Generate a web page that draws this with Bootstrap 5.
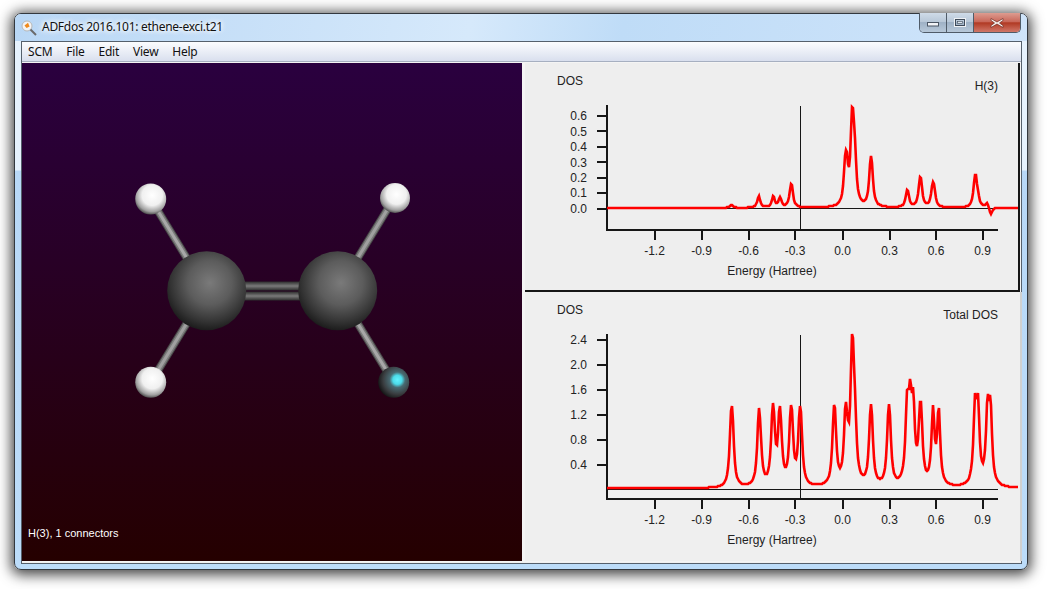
<!DOCTYPE html>
<html lang="en">
<head>
<meta charset="utf-8">
<title>ADFdos 2016.101: ethene-exci.t21</title>
<link href="https://cdn.jsdelivr.net/npm/bootstrap@5.3.0/dist/css/bootstrap.min.css" rel="stylesheet">
<style>
html,body{height:100%;overflow:hidden;background:#fff}
.app-win{width:1014px;height:557px;margin:13px 0 0 14px;border:1px solid #33383e;border-radius:7px;position:relative;
  background:linear-gradient(to bottom,#e6f2fd 0,#e6f2fd 156px,#b8d8f7 157px,#bcdcf9 100%);
  box-shadow:0 2px 13px 3px rgba(0,0,0,.72)}
.title-strip{height:27px;padding-left:6px;gap:5px;background:linear-gradient(100deg,#b9d7f5 0,#d6e9fb 45%,#bfdcf7 60%,#cfe4fa 100%);border-radius:6px 6px 0 0}
.title-text{font:12px/1 "Noto Sans","Open Sans",sans-serif;letter-spacing:-.28px;color:#111;text-shadow:0 0 6px #fff,0 0 6px #fff,0 0 4px #fff;margin-top:-1px}
.win-ctl{position:absolute;top:-1px;right:6px;height:20px;width:102px;border:1px solid #4f5b68;border-top:0;border-radius:0 0 5px 5px;overflow:hidden}
.win-btn{height:100%;border-right:1px solid #4f5b68;background:linear-gradient(to bottom,#cfdbe8 0,#b9c8d8 45%,#9fb2c6 50%,#b7c8d9 100%)}
.wb-n{width:28px}.wb-c{width:47px;border-right:0;background:linear-gradient(to bottom,#dd9c90 0,#c9685a 45%,#b13a24 52%,#d0786a 100%)}
.client-box{margin:0 5px 0 6px;height:523px;border:1px solid #55606c;background:#f0f0f0}
.menu-strip{height:20px;padding-left:6px;gap:13.8px;background:linear-gradient(to bottom,#fbfcfe 0,#eef1f8 40%,#d9dfee 100%);border-bottom:1px solid #a6afc0;font:12px/19px "Noto Sans","Open Sans",sans-serif;letter-spacing:-.2px;color:#111}
.work-area{height:500px;padding-top:1px;background:#f4f4f4}
.mol-pane{width:500px;height:498px;background:linear-gradient(to bottom,#2a003f 0,#250000 100%)}
.mol-pane svg{display:block}
.mol-caption{font:11px/1 "Liberation Sans",Arial,sans-serif;color:#fff;padding:0 0 22px 6px}
.plots-col{width:498px;margin-left:3px}
.plot-a{height:229px;width:495px;background:#eeeeee;border-right:2px solid #161616;border-bottom:2px solid #161616}
.plot-b{height:269px;width:497px;background:#efefef;border-right:2px solid #d0d0d0}
.plot-a svg,.plot-b svg{display:block}
.plot-svg text{font:12px "Liberation Sans",Arial,sans-serif;fill:#222}
.ax{stroke:#161616;stroke-width:2;fill:none;shape-rendering:crispEdges}
.thin{stroke:#161616;stroke-width:1;fill:none;shape-rendering:crispEdges}
.spec{stroke:#ff0000;stroke-width:2.6;fill:none;stroke-linejoin:miter}
</style>
</head>
<body class="m-0">
<div class="app-win">
  <div class="title-strip d-flex align-items-center">
    <svg width="16" height="16" viewBox="0 0 16 16"><circle cx="6" cy="6" r="5" fill="#f4f4f4" stroke="#b8b8b8"/><path d="M3.5 5.5 7 2.8 8.6 6.5 5.6 8z" fill="#f08a1c"/><path d="M9.5 9.5 15 15" stroke="#6a6a6a" stroke-width="2"/></svg>
    <span class="title-text">ADFdos 2016.101: ethene-exci.t21</span>
  </div>
  <div class="win-ctl d-flex">
    <div class="win-btn wb-n d-flex align-items-center justify-content-center"><svg width="14" height="8" viewBox="0 0 14 8"><rect x="1.5" y="3.5" width="11" height="3.5" fill="#f2f4f7" stroke="#4a5563"/></svg></div>
    <div class="win-btn wb-n d-flex align-items-center justify-content-center"><svg width="14" height="12" viewBox="0 0 14 12"><rect x="1.5" y="1.5" width="11" height="8" fill="none" stroke="#eef1f5" stroke-width="1"/><rect x="2.5" y="2.5" width="9" height="6" fill="none" stroke="#3f4a58"/><rect x="4.5" y="4.5" width="5" height="2" fill="#dfe6ee" stroke="#3f4a58" stroke-width=".6"/></svg></div>
    <div class="win-btn wb-c d-flex align-items-center justify-content-center"><svg width="16" height="12" viewBox="0 0 16 12"><path d="M2 1.5 8 5l6-3.500v2L10.500 6 14 8.500v2L8 7l-6 3.500v-2L5.500 6 2 3.500z" fill="#f6f1ef" stroke="#6d2a1f" stroke-width=".7"/></svg></div>
  </div>
  <div class="client-box">
    <nav class="menu-strip d-flex"><span>SCM</span><span>File</span><span>Edit</span><span>View</span><span>Help</span></nav>
    <div class="work-area d-flex">
      <div class="mol-pane d-flex flex-column justify-content-between">
        <svg width="500" height="460" viewBox="22 63 500 460">
          <defs>
            <radialGradient id="gc" cx=".54" cy=".4" r=".62"><stop offset="0" stop-color="#7a7a7a"/><stop offset=".45" stop-color="#5c5c5c"/><stop offset=".8" stop-color="#333333"/><stop offset="1" stop-color="#191919"/></radialGradient>
            <radialGradient id="gh" cx=".55" cy=".38" r=".66"><stop offset="0" stop-color="#ffffff"/><stop offset=".5" stop-color="#f0f0f0"/><stop offset=".8" stop-color="#a0a0a0"/><stop offset="1" stop-color="#333333"/></radialGradient>
            <radialGradient id="gb" cx=".62" cy=".42" r=".66"><stop offset="0" stop-color="#62f2ff"/><stop offset=".22" stop-color="#4cdbe9"/><stop offset=".38" stop-color="#486a72"/><stop offset=".7" stop-color="#3a3d40"/><stop offset="1" stop-color="#101010"/></radialGradient>
            <linearGradient id="gd" x1="0" y1="0" x2="0" y2="1"><stop offset="0" stop-color="#2c2c2c"/><stop offset=".5" stop-color="#7a7a7a"/><stop offset="1" stop-color="#2c2c2c"/></linearGradient>
          </defs>
          <g stroke-linecap="butt" fill="none">
            <path d="M150.700 199 206.700 290.700" stroke="#4a4a4a" stroke-width="8"/><path d="M150.700 199 206.700 290.700" stroke="#7c7c7c" stroke-width="6"/><path d="M150.700 199 206.700 290.700" stroke="#a8a8a8" stroke-width="3"/>
            <path d="M393.700 199 337.700 290.700" stroke="#4a4a4a" stroke-width="8"/><path d="M393.700 199 337.700 290.700" stroke="#7c7c7c" stroke-width="6"/><path d="M393.700 199 337.700 290.700" stroke="#a0a0a0" stroke-width="3"/>
            <path d="M150.700 382.300 206.700 290.700" stroke="#4a4a4a" stroke-width="8"/><path d="M150.700 382.300 206.700 290.700" stroke="#7c7c7c" stroke-width="6"/><path d="M150.700 382.300 206.700 290.700" stroke="#a0a0a0" stroke-width="3"/>
            <path d="M393.700 382.300 337.700 290.700" stroke="#4a4a4a" stroke-width="8"/><path d="M393.700 382.300 337.700 290.700" stroke="#7c7c7c" stroke-width="6"/><path d="M393.700 382.300 337.700 290.700" stroke="#a8a8a8" stroke-width="3"/>
          </g>
          <rect x="240" y="281.500" width="64" height="9" fill="url(#gd)"/>
          <rect x="240" y="291.500" width="64" height="9" fill="url(#gd)"/>
          <circle cx="206.700" cy="290.700" r="39.500" fill="url(#gc)"/>
          <circle cx="337.700" cy="290.700" r="39.500" fill="url(#gc)"/>
          <circle cx="150.700" cy="199" r="15.500" fill="url(#gh)"/>
          <circle cx="395" cy="198" r="15" fill="url(#gh)"/>
          <circle cx="150.700" cy="382.300" r="15.500" fill="url(#gh)"/>
          <circle cx="393.700" cy="382.300" r="15.500" fill="url(#gb)"/>
        </svg>
        <div class="mol-caption">H(3), 1 connectors</div>
      </div>
      <div class="plots-col d-flex flex-column">
        <div class="plot-a">
          <svg class="plot-svg" width="493" height="227" viewBox="525 63 493 227">
            <text x="557" y="85">DOS</text>
            <text x="998" y="90" text-anchor="end">H(3)</text>
            <path class="thin" d="M607 208.500H1018M800.500 106V229"/>
            <path class="ax" d="M607 105V230H998M597 115.500H607M597 131H607M597 146.500H607M597 162H607M597 177.500H607M597 193H607M597 208.500H607M654.500 230V240M701.500 230V240M748.500 230V240M795 230V240M842.500 230V240M889.500 230V240M936 230V240M982.500 230V240"/>
            <g text-anchor="end">
              <text x="587" y="120">0.6</text><text x="587" y="135.500">0.5</text><text x="587" y="151">0.4</text><text x="587" y="166.500">0.3</text><text x="587" y="182">0.2</text><text x="587" y="197">0.1</text><text x="587" y="213">0.0</text>
            </g>
            <g text-anchor="middle">
              <text x="654.500" y="255">-1.2</text><text x="701.500" y="255">-0.9</text><text x="748.500" y="255">-0.6</text><text x="795" y="255">-0.3</text><text x="842.500" y="255">0.0</text><text x="889.500" y="255">0.3</text><text x="936" y="255">0.6</text><text x="982.500" y="255">0.9</text>
              <text x="772" y="275">Energy (Hartree)</text>
            </g>
            <polyline class="spec" id="specA"/>
          </svg>
        </div>
        <div class="plot-b">
          <svg class="plot-svg" width="495" height="269" viewBox="525 292 495 269">
            <text x="557" y="314">DOS</text>
            <text x="998" y="319" text-anchor="end">Total DOS</text>
            <path class="thin" d="M607 489.500H998M800.500 335V498"/>
            <path class="ax" d="M607 334V499H998M597 339.500H607M597 364.500H607M597 389.500H607M597 414.500H607M597 439.500H607M597 464.500H607M654.500 499V509M701.500 499V509M748.500 499V509M795 499V509M842.500 499V509M889.500 499V509M936 499V509M982.500 499V509"/>
            <g text-anchor="end">
              <text x="587" y="344">2.4</text><text x="587" y="369">2.0</text><text x="587" y="394">1.6</text><text x="587" y="419">1.2</text><text x="587" y="444">0.8</text><text x="587" y="469">0.4</text>
            </g>
            <g text-anchor="middle">
              <text x="654.500" y="524">-1.2</text><text x="701.500" y="524">-0.9</text><text x="748.500" y="524">-0.6</text><text x="795" y="524">-0.3</text><text x="842.500" y="524">0.0</text><text x="889.500" y="524">0.3</text><text x="936" y="524">0.6</text><text x="982.500" y="524">0.9</text>
              <text x="772" y="544">Energy (Hartree)</text>
            </g>
            <polyline class="spec" id="specB"/>
          </svg>
        </div>
      </div>
    </div>
  </div>
</div>
<script src="https://cdn.jsdelivr.net/npm/bootstrap@5.3.0/dist/js/bootstrap.bundle.min.js"></script>
<script>
function spectrum(id,base,w,peaks){
  var p=peaks.map(function(q){return q[1]});
  function L(d){return w*w/(d*d+w*w)}
  for(var it=0;it<40;it++){peaks.forEach(function(q,i){var s=0;peaks.forEach(function(r,j){if(j!==i)s+=p[j]*L(q[0]-r[0])});p[i]=0.5*p[i]+0.5*(q[1]-s)})}
  var pts=[];
  for(var x=607;x<=1018;x+=1){var y=0;peaks.forEach(function(q,i){y+=p[i]*L(x-q[0])});pts.push(x+','+Math.round(base-y))}
  document.getElementById(id).setAttribute('points',pts.join(' '));
}
spectrum('specA',208,1.7,[[731.3,3],[758.7,12],[773.3,12],[780,11],[790.3,20],[791.7,24],[845,52],[846.7,58],[851.8,98],[853.2,98],[855,70],[870.3,48],[871.7,49],[906.8,17],[908,17],[919.8,30],[921,30],[932.4,24],[934,24],[974.3,28],[975.7,34],[978,18],[987.3,5],[990.7,-6]]);
spectrum('specB',488.500,1.8,[[731,78],[732.5,78],[758.7,79],[760.3,66],[772.5,83],[774,76],[779.5,83],[781,68],[790.5,80],[792,78],[799.500,79],[801,76],[833.7,80],[835,80],[845.5,87],[847.5,72],[851.8,150],[853,150],[855,100],[870.3,79],[871.7,79],[888.3,79],[889.7,79],[907,99],[908.5,98],[910.3,110],[913.3,100],[919.8,84],[921.2,84],[933,83],[938.7,83],[975,95],[978,95],[987.5,94],[990.5,93]]);
</script>
</body>
</html>
